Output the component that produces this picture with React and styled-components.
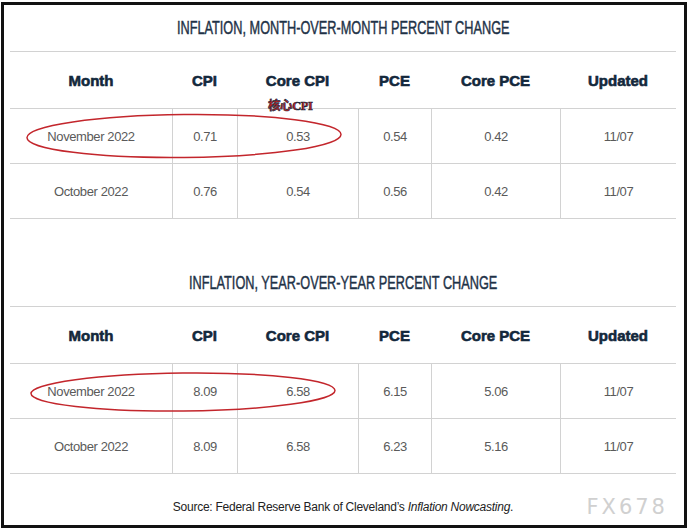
import React from "react"
import styled, { createGlobalStyle } from "styled-components"

const GlobalStyle = createGlobalStyle`
    html, body {
        margin: 0;
        padding: 0;
        background: #ffffff;
    }
`

const COLUMNS = "162px 65px 121px 73px 129px 116px"

const Frame = styled.div`
    box-sizing: border-box;
    width: 686px;
    height: 526px;
    margin: 2px 0 0 1px;
    border: 3px solid #111;
    padding: 0 8px 0 6px;
    background: #fff;
    overflow: hidden;
`

const Section = styled.section`
    margin-top: ${(p) => p.$gap || 0}px;
`

const Title = styled.h2`
    margin: 0;
    height: 46px;
    border-bottom: 1px solid #d2d2d2;
    display: flex;
    align-items: center;
    justify-content: center;
    font-family: "Liberation Sans", Arial, sans-serif;
    font-weight: 400;
    font-size: 19px;
    color: #1e3247;
`

const TitleText = styled.span`
    display: inline-block;
    white-space: nowrap;
    transform: scaleX(0.67);
    -webkit-text-stroke: 0.45px #1e3247;
`

const Row = styled.div`
    position: relative;
    display: grid;
    grid-template-columns: ${COLUMNS};
    height: ${(p) => p.$h}px;
    border-bottom: 1px solid #d2d2d2;
`

const HeadCell = styled.div`
    position: relative;
    display: flex;
    align-items: center;
    justify-content: center;
    font-family: "Liberation Sans", Arial, sans-serif;
    font-weight: 700;
    font-size: 15px;
    color: #13283c;
    -webkit-text-stroke: 0.6px #13283c;
`

const Cell = styled.div`
    display: flex;
    align-items: center;
    justify-content: center;
    font-family: "Liberation Sans", Arial, sans-serif;
    font-size: 13px;
    letter-spacing: -0.4px;
    color: #5a5a5a;
    border-left: ${(p) => (p.$first ? "none" : "1px solid #d2d2d2")};
`

const Note = styled.span`
    position: absolute;
    left: 31px;
    top: 43px;
    font-family: "Liberation Serif", "Noto Sans CJK SC", serif;
    font-size: 12.5px;
    font-weight: 700;
    color: #c4201f;
    letter-spacing: -0.4px;
`

const Ring = styled.svg`
    position: absolute;
    left: ${(p) => p.$left}px;
    top: ${(p) => p.$top}px;
    overflow: visible;
    pointer-events: none;
`

const Footer = styled.footer`
    width: 666px;
    padding-top: 21px;
    display: grid;
    grid-template-columns: 1fr auto 1fr;
    align-items: center;
`

const Source = styled.p`
    margin: 0;
    font-family: "Liberation Sans", Arial, sans-serif;
    font-size: 12px;
    letter-spacing: -0.25px;
    line-height: 16px;
    color: #222;
`

const Watermark = styled.span`
    justify-self: end;
    margin-right: 8px;
    font-family: "DejaVu Sans", sans-serif;
    font-size: 21px;
    letter-spacing: 3px;
    color: #d0d0d0;
`

const headers = ["Month", "CPI", "Core CPI", "PCE", "Core PCE", "Updated"]

const tables = [
    {
        title: "INFLATION, MONTH-OVER-MONTH PERCENT CHANGE",
        gap: 0,
        note: true,
        rows: [
            ["November 2022", "0.71", "0.53", "0.54", "0.42", "11/07"],
            ["October 2022", "0.76", "0.54", "0.56", "0.42", "11/07"],
        ],
        ring: { left: 16, top: 4, w: 316, h: 46, rx: 157, ry: 21.5 },
    },
    {
        title: "INFLATION, YEAR-OVER-YEAR PERCENT CHANGE",
        gap: 41,
        note: false,
        rows: [
            ["November 2022", "8.09", "6.58", "6.15", "5.06", "11/07"],
            ["October 2022", "8.09", "6.58", "6.23", "5.16", "11/07"],
        ],
        ring: { left: 20, top: 8, w: 306, h: 40, rx: 152, ry: 19 },
    },
]

function Ellipse({ ring }) {
    return (
        <Ring
            $left={ring.left}
            $top={ring.top}
            width={ring.w}
            height={ring.h}
            viewBox={`0 0 ${ring.w} ${ring.h}`}
        >
            <ellipse
                cx={ring.w / 2}
                cy={ring.h / 2}
                rx={ring.rx}
                ry={ring.ry}
                fill="none"
                stroke="#c3262c"
                strokeWidth="1.5"
                transform={`rotate(-0.6 ${ring.w / 2} ${ring.h / 2})`}
            />
        </Ring>
    )
}

function Table({ table }) {
    return (
        <Section $gap={table.gap}>
            <Title>
                <TitleText>{table.title}</TitleText>
            </Title>
            <Row $h={56}>
                {headers.map((h) => (
                    <HeadCell key={h}>
                        {h}
                        {table.note && h === "Core CPI" && <Note>核心CPI</Note>}
                    </HeadCell>
                ))}
            </Row>
            {table.rows.map((row, i) => (
                <Row key={row[0]} $h={54}>
                    {row.map((v, j) => (
                        <Cell key={j} $first={j === 0}>
                            {v}
                        </Cell>
                    ))}
                    {/* red hand-drawn circle over the first data row */}
                    {i === 0 && <Ellipse ring={table.ring} />}
                </Row>
            ))}
        </Section>
    )
}

export default function App() {
    return (
        <>
            <GlobalStyle />
            <Frame>
                {tables.map((t) => (
                    <Table key={t.title} table={t} />
                ))}
                <Footer>
                    <span />
                    <Source>
                        Source: Federal Reserve Bank of Cleveland’s <i>Inflation Nowcasting</i>.
                    </Source>
                    <Watermark>FX678</Watermark>
                </Footer>
            </Frame>
        </>
    )
}
